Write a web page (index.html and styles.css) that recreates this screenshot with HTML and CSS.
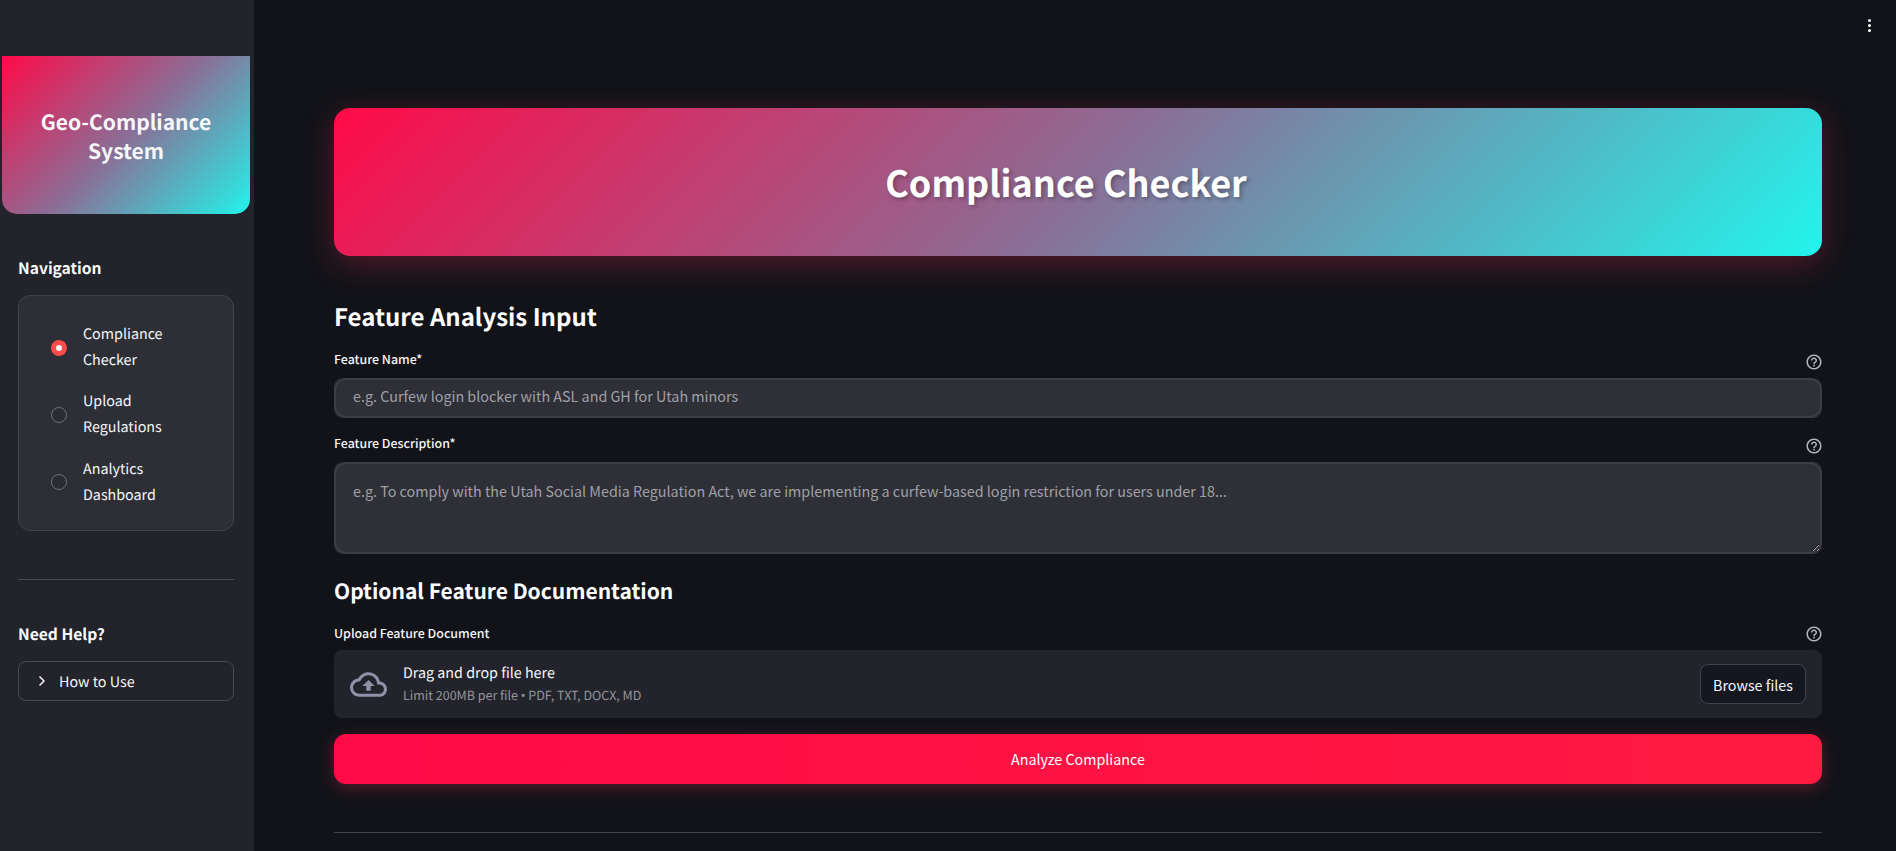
FILE: index.html
```html
<!DOCTYPE html>
<html lang="en">
<head>
<meta charset="utf-8">
<title>Geo-Compliance System</title>
<link rel="stylesheet" href="styles.css">
</head>
<body>
<div class="app">
  <aside class="sidebar">
    <div class="logo"><span>Geo-Compliance System</span></div>
    <h3 class="side-title nav-title">Navigation</h3>
    <div class="radio-box">
      <label class="radio-item"><span class="radio on"></span><span class="radio-text">Compliance Checker</span></label>
      <label class="radio-item"><span class="radio"></span><span class="radio-text">Upload Regulations</span></label>
      <label class="radio-item"><span class="radio"></span><span class="radio-text">Analytics Dashboard</span></label>
    </div>
    <hr class="side-rule">
    <h3 class="side-title help-title">Need Help?</h3>
    <div class="expander">
      <svg class="chevron" viewBox="0 0 10 14" width="10" height="14"><path d="M2.5 2.5 7 7l-4.500 4.500" fill="none" stroke="#f4f4f6" stroke-width="1.500"/></svg>
      <span>How to Use</span>
    </div>
  </aside>
  <main class="main">
    <button class="kebab" aria-label="Menu"><i></i><i></i><i></i></button>
    <header class="hero"><h1>Compliance Checker</h1></header>
    <h2 class="section first">Feature Analysis Input</h2>
    <div class="label-row">
      <label>Feature Name*</label>
      <svg class="help" viewBox="0 0 24 24" width="18" height="18"><path d="M11 18h2v-2h-2v2zm1-16C6.480 2 2 6.480 2 12s4.480 10 10 10 10-4.480 10-10S17.520 2 12 2zm0 18c-4.410 0-8-3.590-8-8s3.590-8 8-8 8 3.590 8 8-3.590 8-8 8zm0-14c-2.210 0-4 1.790-4 4h2c0-1.100.9-2 2-2s2 .9 2 2c0 2-3 1.750-3 5h2c0-2.250 3-2.500 3-5 0-2.210-1.790-4-4-4z"/></svg>
    </div>
    <div class="field"><input class="control input" placeholder="e.g. Curfew login blocker with ASL and GH for Utah minors"></div>
    <div class="label-row second">
      <label>Feature Description*</label>
      <svg class="help" viewBox="0 0 24 24" width="18" height="18"><path d="M11 18h2v-2h-2v2zm1-16C6.480 2 2 6.480 2 12s4.480 10 10 10 10-4.480 10-10S17.520 2 12 2zm0 18c-4.410 0-8-3.590-8-8s3.590-8 8-8 8 3.590 8 8-3.590 8-8 8zm0-14c-2.210 0-4 1.790-4 4h2c0-1.100.9-2 2-2s2 .9 2 2c0 2-3 1.750-3 5h2c0-2.250 3-2.500 3-5 0-2.210-1.790-4-4-4z"/></svg>
    </div>
    <div class="field"><textarea class="control area" placeholder="e.g. To comply with the Utah Social Media Regulation Act, we are implementing a curfew-based login restriction for users under 18..."></textarea></div>
    <h2 class="section doc">Optional Feature Documentation</h2>
    <div class="label-row upload-label">
      <label>Upload Feature Document</label>
      <svg class="help" viewBox="0 0 24 24" width="18" height="18"><path d="M11 18h2v-2h-2v2zm1-16C6.480 2 2 6.480 2 12s4.480 10 10 10 10-4.480 10-10S17.520 2 12 2zm0 18c-4.410 0-8-3.590-8-8s3.590-8 8-8 8 3.590 8 8-3.590 8-8 8zm0-14c-2.210 0-4 1.790-4 4h2c0-1.100.9-2 2-2s2 .9 2 2c0 2-3 1.750-3 5h2c0-2.250 3-2.500 3-5 0-2.210-1.790-4-4-4z"/></svg>
    </div>
    <div class="dropzone">
      <svg class="cloud" viewBox="0 0 24 24" width="37" height="37"><path d="M19.350 10.040C18.670 6.590 15.640 4 12 4 9.110 4 6.600 5.640 5.350 8.040 2.340 8.360 0 10.910 0 14c0 3.310 2.690 6 6 6h13c2.760 0 5-2.240 5-5 0-2.640-2.050-4.780-4.650-4.960zM19 18H6c-2.210 0-4-1.790-4-4 0-2.050 1.530-3.760 3.560-3.970l1.070-.11.5-.95C8.080 7.140 9.940 6 12 6c2.620 0 4.880 1.860 5.390 4.430l.3 1.500 1.530.11c1.560.1 2.780 1.410 2.780 2.960 0 1.650-1.350 3-3 3zM8 13h2.550v3h2.900v-3H16l-4-4z"/></svg>
      <div class="drop-text">
        <div class="drop-main">Drag and drop file here</div>
        <div class="drop-sub">Limit 200MB per file <span class="bullet">•</span> PDF, TXT, DOCX, MD</div>
      </div>
      <button class="browse">Browse files</button>
    </div>
    <button class="analyze">Analyze Compliance</button>
    <hr class="main-rule">
  </main>
</div>
</body>
</html>
```
FILE: styles.css
```css
* { box-sizing: border-box; }
html, body { margin: 0; height: 100%; overflow: hidden; }
body {
  background: #111318;
  color: #fafafa;
  font-family: "Noto Sans CJK SC", "Noto Sans", sans-serif;
  text-rendering: geometricPrecision;
}
.app { display: flex; height: 851px; }
.sidebar {
  width: 254px;
  flex: none;
  background: #22232b;
  padding: 56px 0 0;
}
.logo {
  margin: 0 4px 0 2px;
  height: 158px;
  border-radius: 0 0 15px 15px;
  background: linear-gradient(135deg, #ff0a48, #8b6d95 50%, #22f3ea);
  display: flex;
  align-items: center;
  justify-content: center;
  text-align: center;
  padding: 3px 30px 0;
  font-size: 21px;
  line-height: 29px;
  font-weight: 600;
  color: #f7f7fa;
}
.side-title {
  margin: 0 18px;
  font-size: 15.600px;
  line-height: 24px;
  font-weight: 700;
}
.nav-title { padding-top: 42px; }
.radio-box {
  margin: 15px 20px 0 18px;
  height: 236px;
  background: #2d2e36;
  border: 1px solid #41424a;
  border-radius: 12px;
  padding: 25px 0 0 32px;
  display: flex;
  flex-direction: column;
  gap: 15px;
}
.radio-item { display: flex; align-items: center; gap: 16px; height: 52px; }
.radio-item:last-child { padding-top: 1px; }
.radio {
  width: 16px;
  height: 16px;
  flex: none;
  border: 1px solid #6f7077;
  border-radius: 50%;
  background: #2a2b33;
  position: relative;
  top: 1px;
}
.radio-item:last-child .radio { top: 0; }
.radio.on {
  border: 5px solid #ff4b4b;
  background: #f6f6f8;
}
.radio-text { width: 100px; font-size: 14.300px; line-height: 26px; color: #f6f6f8; }
.side-rule {
  margin: 48px 20px 0 18px;
  border: 0;
  border-top: 1px solid #4a4b52;
}
.help-title { padding-top: 42px; }
.expander {
  margin: 15px 20px 0 18px;
  height: 40px;
  border: 1px solid #4a4b52;
  border-radius: 8px;
  display: flex;
  align-items: center;
  padding-left: 18px;
  gap: 12px;
  font-size: 14.300px;
  color: #f6f6f8;
}
.main {
  flex: 1;
  position: relative;
  padding: 108px 74px 0 80px;
  min-width: 0;
}
.kebab {
  position: absolute;
  top: 19px;
  right: 24px;
  width: 4px;
  padding: 0;
  border: 0;
  background: none;
  display: flex;
  flex-direction: column;
  gap: 2px;
}
.kebab i { display: block; width: 3px; height: 3px; border-radius: 50%; background: #fafafa; }
.hero {
  height: 148px;
  border-radius: 16px;
  background: linear-gradient(135deg, #ff0a48, #8b6d95 50%, #22f5ec);
  box-shadow: 0 8px 32px rgba(254, 44, 85, 0.28);
  display: flex;
  align-items: center;
  justify-content: center;
  padding-right: 24px;
}
.hero h1 {
  margin: 0;
  font-size: 36px;
  line-height: 56px;
  font-weight: 700;
  color: #fff;
  text-shadow: 2px 2px 4px rgba(0, 0, 0, 0.3);
}
.section { margin: 0; font-size: 24px; line-height: 36px; font-weight: 600; color: #fff; }
.section.first { margin-top: 42px; }
.section.doc { margin-top: 20px; font-size: 21px; line-height: 35px; }
.label-row {
  display: flex;
  justify-content: space-between;
  align-items: center;
  height: 20px;
  margin-top: 15px;
  font-size: 12.400px;
  font-weight: 500;
  color: #f6f6f8;
}
.label-row svg { margin-right: -1px; position: relative; top: 3px; }
.label-row.upload-label { margin-top: 14px; }
.label-row.upload-label svg { top: 1px; }
.help { fill: #b6b7bb; }
.field {
  margin-top: 9px;
  border-radius: 8px;
  background: #26272e;
  display: flex;
}
.control {
  width: 100%;
  display: block;
  background: #2e2f37;
  border: 2px solid #3d3e45;
  border-radius: 12px;
  font: inherit;
  font-size: 14.330px;
  color: #fafafa;
  outline: none;
  padding: 0 17px;
}
.control::placeholder { color: #a0a1a6; opacity: 1; }
.input { height: 40px; padding-bottom: 6px; }
.area { height: 92px; line-height: 24px; padding-top: 15px; resize: vertical; }
.dropzone {
  margin-top: 7px;
  height: 68px;
  background: #22232b;
  border-radius: 8px;
  display: flex;
  align-items: center;
  padding: 0 16px;
}
.cloud { fill: #8f92a6; flex: none; }
.drop-text { margin-left: 16px; flex: 1; padding-bottom: 1px; }
.drop-main { font-size: 14.300px; line-height: 24px; color: #f6f6f8; }
.drop-sub { font-size: 12.500px; line-height: 20px; color: #95969c; }
.bullet { font-family: "Noto Sans", sans-serif; }
.browse {
  width: 106px;
  height: 40px;
  background: #14171f;
  border: 1px solid #43444b;
  border-radius: 8px;
  font: inherit;
  font-size: 14.300px;
  color: #f6f6f8;
}
.analyze {
  display: block;
  width: 100%;
  margin-top: 16px;
  height: 50px;
  border: 0;
  border-radius: 12px;
  padding: 0 0 2px;
  background: linear-gradient(90deg, #ff0a47, #ff1a40);
  box-shadow: 0 4px 16px rgba(254, 44, 85, 0.3);
  font: inherit;
  font-size: 14.300px;
  color: #fff;
}
.main-rule { margin: 48px 0 0; border: 0; border-top: 1px solid #43444b; }
```
